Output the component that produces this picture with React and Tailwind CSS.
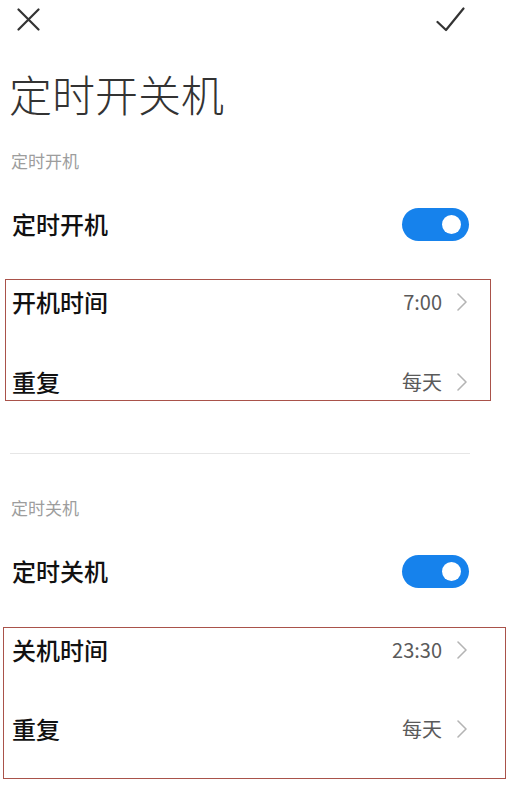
import React, { useState } from 'react';

const cjk = { fontFamily: '"Noto Sans CJK SC", "Noto Sans", sans-serif' };

const Toggle = ({ on, onChange }) => (
  <button
    onClick={() => onChange(!on)}
    className={`w-[67px] h-[33px] rounded-full flex items-center px-[8px] ${on ? 'bg-[#1682ec] justify-end' : 'bg-[#d8d8d8] justify-start'}`}
  >
    <span className="block w-[19px] h-[19px] rounded-full bg-white" />
  </button>
);

const Chevron = () => (
  <svg width="12" height="20" viewBox="0 0 12 20" className="ml-[14px]">
    <path d="M2 2 L10 10 L2 18" fill="none" stroke="#b4b4b4" strokeWidth="1.6" strokeLinecap="round" strokeLinejoin="round" />
  </svg>
);

const DetailRow = ({ label, value }) => (
  <div className="h-[30px] flex items-center justify-between">
    <span className="text-[24px] leading-[30px] font-medium text-[#111]">{label}</span>
    <div className="flex items-center">
      <span className="text-[20px] leading-[30px] text-[#5a5a5a]">{value}</span>
      <Chevron />
    </div>
  </div>
);

const Section = ({ heading, title, on, onChange, timeLabel, time, boxClass }) => (
  <>
    <div className="h-[26px] leading-[26px] text-[17px] text-[#9d9d9d] pl-[11px]">{heading}</div>
    <div className="h-[56px] flex items-center justify-between pl-[12px] pr-[42px] mt-[22px]">
      <span className="text-[24px] font-medium text-[#111]">{title}</span>
      <Toggle on={on} onChange={onChange} />
    </div>
    <div className={`border-[1.5px] border-[#a9524a] flex flex-col pt-[7px] ${boxClass}`}>
      <DetailRow label={timeLabel} value={time} />
      <DetailRow label="重复" value="每天" />
    </div>
  </>
);

export default function App() {
  const [bootOn, setBootOn] = useState(true);
  const [shutOn, setShutOn] = useState(true);

  return (
    <div className="w-[511px] h-[785px] bg-white overflow-hidden" style={cjk}>
      {/* top bar */}
      <div className="h-[38px] flex items-center justify-between pl-[17px] pr-[46px]">
        <svg width="23" height="23" viewBox="0 0 23 23">
          <path d="M1.5 1.5 L21.5 21.5 M21.5 1.5 L1.5 21.5" stroke="#333" strokeWidth="2.2" strokeLinecap="round" />
        </svg>
        <svg width="29" height="25" viewBox="0 0 29 25">
          <path d="M1.5 15 L10 23 L27.5 1.5" fill="none" stroke="#333" strokeWidth="2.2" strokeLinecap="round" strokeLinejoin="round" />
        </svg>
      </div>

      <h1 className="mt-[20px] h-[70px] leading-[70px] text-[43px] font-light text-[#333] pl-[9px]">定时开关机</h1>

      <div className="mt-[20px]">
        <Section
          heading="定时开机"
          title="定时开机"
          on={bootOn}
          onChange={setBootOn}
          timeLabel="开机时间"
          time="7:00"
          boxClass="mt-[27px] ml-[5px] w-[486px] h-[122px] gap-[50px] pl-[6px] pr-[22px]"
        />
      </div>

      <div className="mt-[52px] ml-[10px] w-[460px] h-px bg-[#e6e6e6]" />

      <div className="mt-[41px]">
        <Section
          heading="定时关机"
          title="定时关机"
          on={shutOn}
          onChange={setShutOn}
          timeLabel="关机时间"
          time="23:30"
          boxClass="mt-[28px] ml-[3px] w-[503px] h-[152px] gap-[49px] pl-[8px] pr-[37px]"
        />
      </div>
    </div>
  );
}
